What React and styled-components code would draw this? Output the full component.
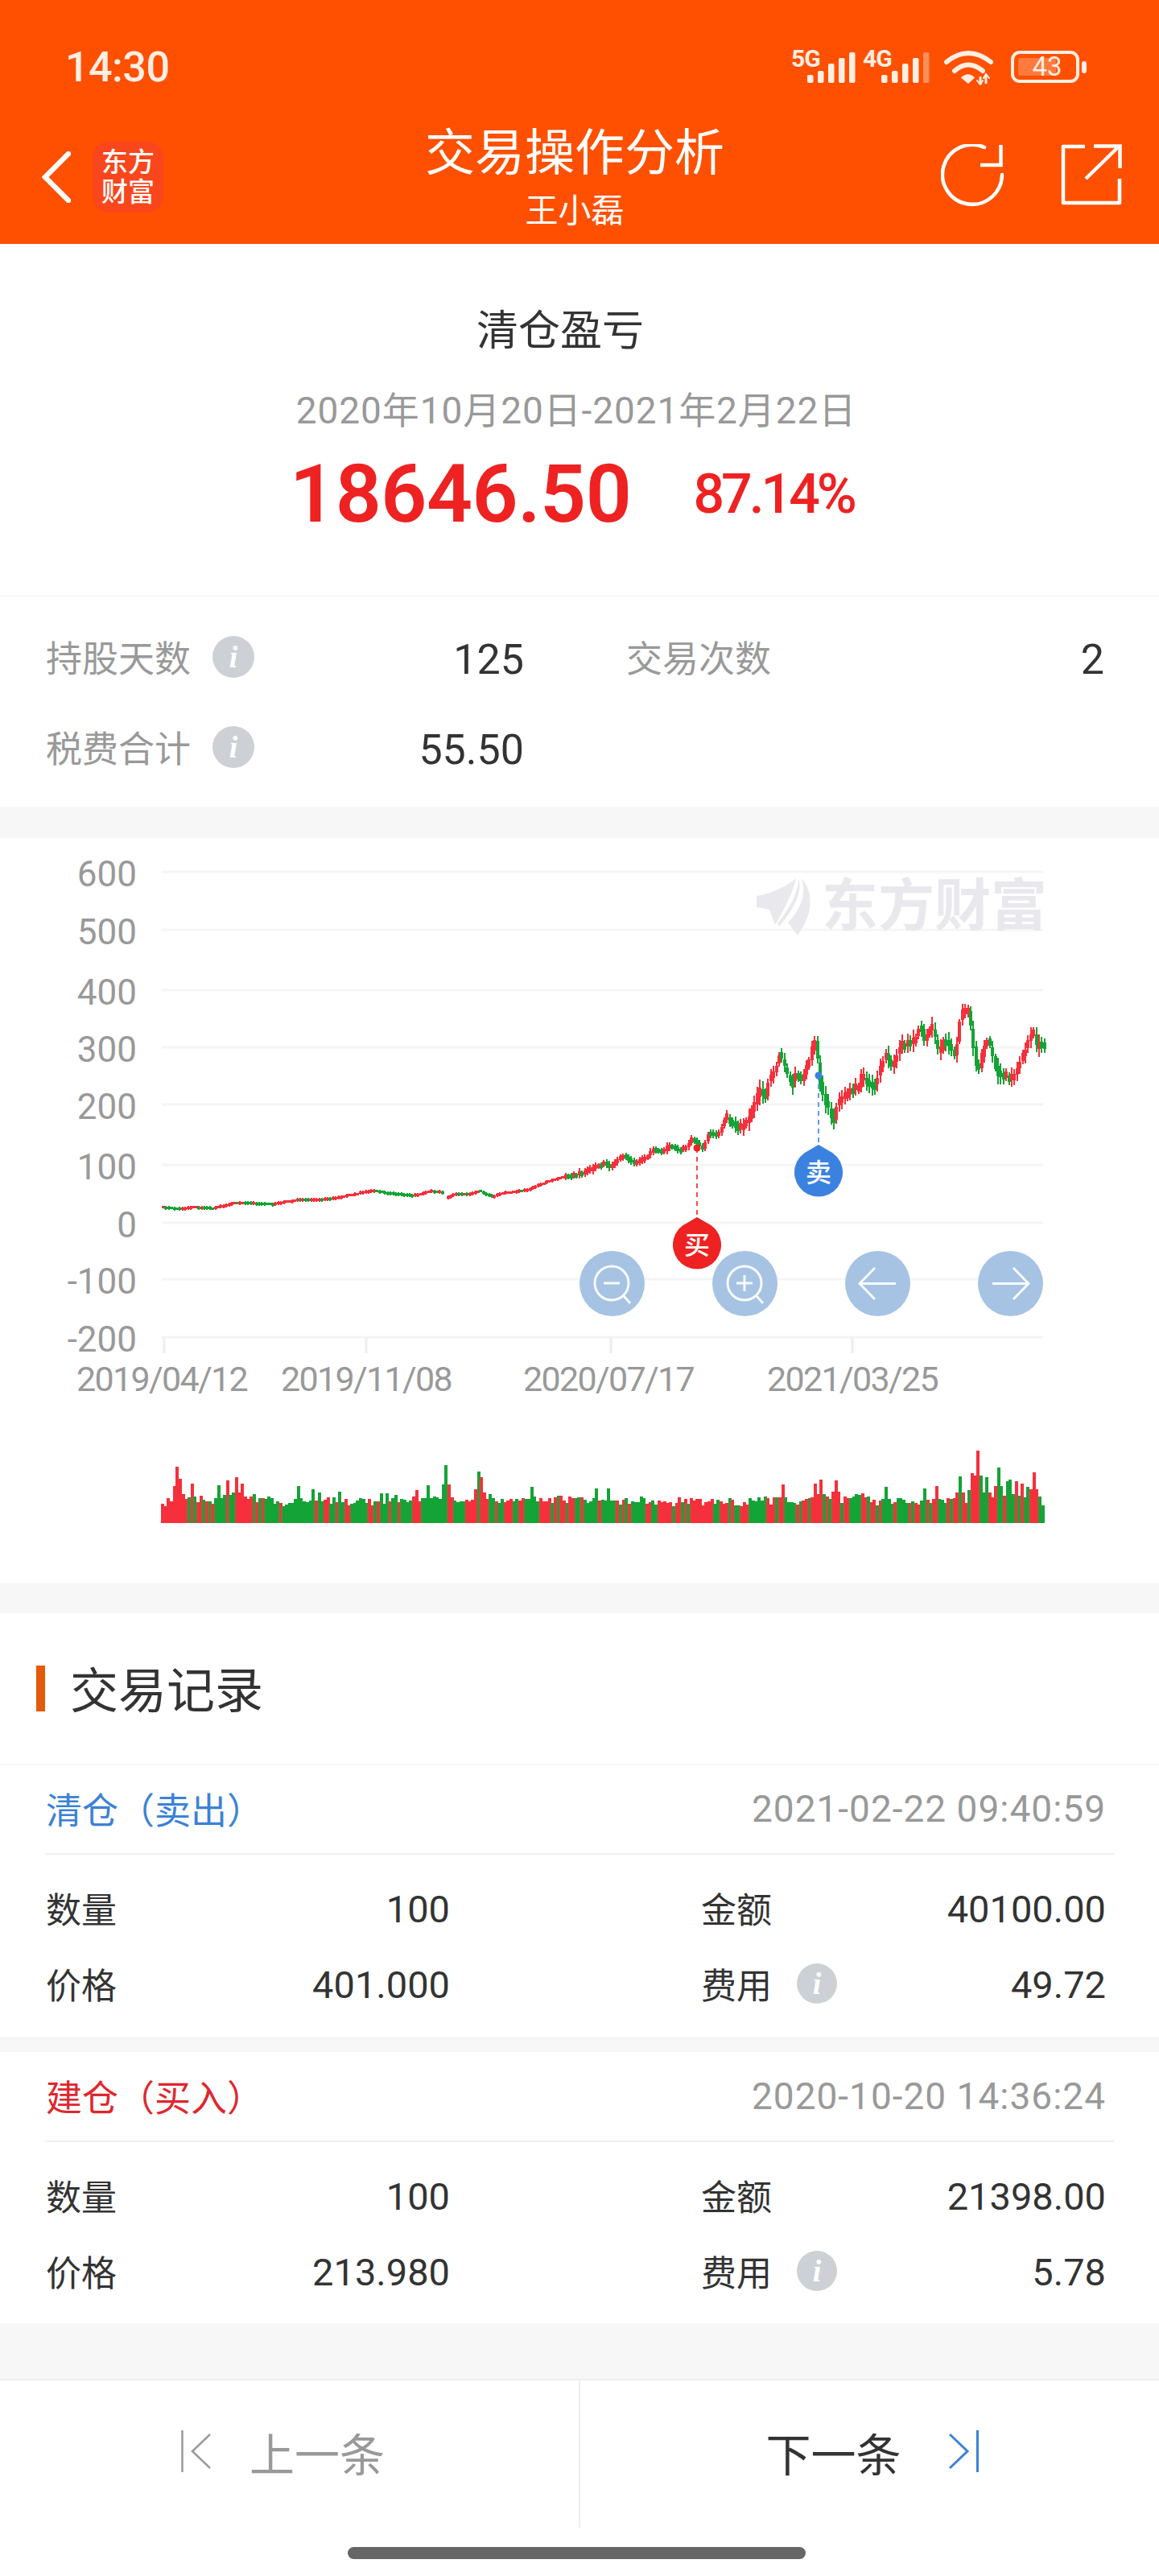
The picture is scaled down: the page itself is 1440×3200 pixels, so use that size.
import React from "react";
import styled, { createGlobalStyle } from "styled-components";

const FONT = `Roboto, "Noto Sans CJK SC", sans-serif`;

const GlobalStyle = createGlobalStyle`
  html, body {
    margin: 0;
    padding: 0;
    background: #fff;
  }
  * {
    box-sizing: border-box;
  }
`;

const Page = styled.div`
  width: 1440px;
  height: 3200px;
  display: flex;
  flex-direction: column;
  overflow: hidden;
  background: #f7f7f7;
  font-family: ${FONT};
  color: #333;
`;

const Header = styled.header`
  height: 303px;
  background: #fe5000;
  color: #fff;
`;

const StatusBar = styled.div`
  height: 168px;
  padding: 60px 99px 0 81px;
  display: flex;
  justify-content: space-between;
  align-items: flex-start;
  color: #ffeee2;
`;

const Clock = styled.div`
  font-size: 52px;
  line-height: 48px;
  font-weight: 500;
  letter-spacing: -0.5px;
`;

const StatusIcons = styled.div`
  display: flex;
  align-items: flex-start;
`;

const Net = styled.div`
  position: relative;
  width: ${(props) => props.$width}px;
  height: 40px;
  margin: 4px 0 0 ${(props) => props.$gap || 0}px;
`;

const NetLabel = styled.span`
  position: absolute;
  left: 0;
  top: -7px;
  font-size: 30px;
  line-height: 32px;
  font-weight: 700;
  letter-spacing: -1px;
`;

const NetBars = styled.svg`
  position: absolute;
  right: 0;
  top: 0;
`;

const Wifi = styled.svg`
  margin: 2px 0 0 18px;
`;

const Battery = styled.div`
  position: relative;
  width: 85px;
  height: 40px;
  margin: 3px 0 0 21px;
  border: 4px solid #ffeee2;
  border-radius: 11px;
  font-size: 33px;
  line-height: 32px;
  text-align: center;
  padding-left: 5px;
  font-weight: 400;

  &::before {
    content: "";
    position: absolute;
    left: 5px;
    top: 5px;
    bottom: 5px;
    width: 47px;
    border-radius: 3px;
    background: #ff7a3c;
  }

  &::after {
    content: "";
    position: absolute;
    right: -13px;
    top: 9px;
    width: 6px;
    height: 15px;
    border-radius: 3px;
    background: #ffeee2;
  }
`;

const BatteryText = styled.span`
  position: relative;
`;

const NavBar = styled.div`
  height: 135px;
  padding: 0 46px 0 34px;
  display: grid;
  grid-template-columns: 1fr auto 1fr;
  align-items: start;
`;

const NavLeft = styled.div`
  display: flex;
  align-items: center;
  gap: 27px;
  padding: 8px 0 0 18px;
`;

const LogoBadge = styled.div`
  width: 88px;
  height: 88px;
  border-radius: 20px;
  background: #f9461c;
  display: grid;
  grid-template-columns: 33px 33px;
  justify-content: center;
  align-content: center;
  font-size: 33px;
  line-height: 37px;
  text-align: center;
  font-weight: 500;
`;

const NavTitle = styled.div`
  display: flex;
  flex-direction: column;
  align-items: center;
`;

const TitleMain = styled.div`
  font-size: 62px;
  line-height: 70px;
  margin-top: -12px;
`;

const TitleSub = styled.div`
  font-size: 41px;
  line-height: 48px;
  margin-top: 12px;
`;

const NavRight = styled.div`
  display: flex;
  justify-content: flex-end;
  gap: 71px;
  padding-top: 11px;
`;

const Summary = styled.section`
  height: 439px;
  padding-top: 73px;
  background: #fff;
  border-bottom: 1px solid #eee;
  display: flex;
  flex-direction: column;
  align-items: center;
`;

const SummaryTitle = styled.div`
  font-size: 52px;
  line-height: 72px;
  margin-right: 48px;
`;

const SummaryDate = styled.div`
  margin-top: 32px;
  margin-right: 8px;
  font-size: 46px;
  line-height: 60px;
  color: #999;
  letter-spacing: 0.9px;
`;

const AmountRow = styled.div`
  margin-top: 18px;
  display: flex;
  align-items: center;
  gap: 77px;
  padding-right: 19px;
  color: #ee2222;
`;

const Amount = styled.div`
  font-size: 100px;
  line-height: 112px;
  font-weight: 600;
  letter-spacing: -0.5px;
`;

const Percent = styled.div`
  font-size: 68px;
  line-height: 80px;
  font-weight: 500;
  letter-spacing: -4px;
`;

const Stats = styled.section`
  height: 262px;
  padding: 19px 67px 0 57px;
  background: #fff;
  display: grid;
  grid-template-columns: 594px 594px;
  grid-auto-rows: 112px;
  column-gap: 127px;
`;

const StatItem = styled.div`
  display: flex;
  align-items: center;
`;

const StatLabel = styled.span`
  font-size: 45px;
  color: #999;
`;

const InfoDot = styled.span`
  width: ${(props) => props.$size}px;
  height: ${(props) => props.$size}px;
  margin-left: ${(props) => props.$gap}px;
  border-radius: 50%;
  background: #cdd1d6;
  color: #fff;
  font-family: "Liberation Serif", serif;
  font-style: italic;
  font-weight: 700;
  font-size: 38px;
  display: flex;
  align-items: center;
  justify-content: center;
`;

const Value = styled.span`
  margin-left: auto;
  margin-top: ${(props) => props.$drop || 4}px;
  font-size: ${(props) => props.$size || 47}px;
  color: #333;
`;

const ChartSection = styled.section`
  position: relative;
  height: 926px;
  margin-top: 39px;
  background: #fff;
`;

const ChartSvg = styled.svg`
  display: block;
`;

const AxisText = styled.text`
  font-family: ${FONT};
  font-size: ${(props) => props.$size}px;
  fill: #999;
  letter-spacing: ${(props) => props.$spacing || 0}px;
`;

const Watermark = styled.text`
  font-family: "Noto Sans CJK SC", sans-serif;
  font-size: 70px;
  font-weight: 700;
  fill: #e9e9ed;
`;

const MarkText = styled.text`
  font-family: "Noto Sans CJK SC", sans-serif;
  font-size: 32px;
  font-weight: 500;
  fill: #fff;
`;

const ChartButtons = styled.div`
  position: absolute;
  right: 144px;
  top: 513px;
  display: flex;
  gap: 84px;
`;

const ChartButton = styled.div`
  width: 81px;
  height: 81px;
  border-radius: 50%;
  background: #a6c3e4;
`;

const Records = styled.section`
  margin-top: 37px;
  background: #fff;
`;

const RecordsHead = styled.div`
  height: 188px;
  padding-left: 45px;
  border-bottom: 1px solid #eee;
  display: flex;
  align-items: center;
  gap: 31px;
`;

const HeadMark = styled.span`
  width: 11px;
  height: 57px;
  background: #e35a0b;
`;

const HeadTitle = styled.h2`
  margin: 0 0 4px;
  font-size: 60px;
  font-weight: 400;
`;

const Card = styled.article`
  height: 338px;
  margin-top: ${(props) => (props.$first ? 0 : 19)}px;
  background: #fff;
`;

const CardHead = styled.div`
  height: 112px;
  margin: 0 56px;
  padding: 0 10px 0 1px;
  border-bottom: 2px solid #f0f0f0;
  display: flex;
  justify-content: space-between;
  align-items: center;
`;

const CardType = styled.span`
  font-size: 45px;
  color: ${(props) => props.$color};
`;

const CardTime = styled.span`
  font-size: 46px;
  letter-spacing: 1px;
  color: #999;
`;

const CardBody = styled.div`
  padding: 19px 66px 0 57px;
  display: grid;
  grid-template-columns: 502px 503px;
  grid-auto-rows: 94px;
  column-gap: 312px;
`;

const CardCell = styled.div`
  display: flex;
  align-items: center;
  font-size: 44px;
`;

const Footer = styled.footer`
  margin-top: 69px;
  height: 246px;
  background: #fff;
  border-top: 2px solid #eee;
`;

const FooterButtons = styled.div`
  height: 183px;
  display: flex;
`;

const FooterButton = styled.div`
  flex: 0 0 ${(props) => props.$width}px;
  display: flex;
  align-items: center;
  justify-content: center;
  gap: ${(props) => props.$gap}px;
  padding: ${(props) => props.$pad};
  font-size: 56px;
  color: ${(props) => props.$color};
  border-right: ${(props) => (props.$divider ? "2px solid #eee" : "none")};
`;

const HomeBar = styled.div`
  width: 569px;
  height: 15px;
  margin: 24px 0 0 432px;
  border-radius: 8px;
  background: #666;
`;

const RED = "#f5303c";
const GREEN = "#14a336";

const gridYs = [1084, 1156, 1231, 1302, 1373, 1448, 1520, 1590, 1662];
const gridLabels = ["600", "500", "400", "300", "200", "100", "0", "-100", "-200"];
const dateLabels = [
  ["2019/04/12", 201, 204],
  ["2019/11/08", 455, 455],
  ["2020/07/17", 756, 759],
  ["2021/03/25", 1059, 1059],
];

const pricePath = [
  [201, 1501], [225, 1503], [239, 1501], [266, 1502], [294, 1495], [340, 1497], [372, 1491],
  [390, 1492], [418, 1489.5], [448, 1483], [466, 1480], [487, 1484], [514, 1486], [535, 1481],
  [551, 1482], [554, 1489.5], [565, 1485], [588, 1484], [595, 1480], [613, 1488], [620, 1484],
  [657, 1479], [675, 1471], [700, 1463], [720, 1460], [752, 1446], [759, 1450], [775, 1436.5],
  [789, 1446], [803, 1440], [812, 1428], [826, 1432], [832, 1422], [844, 1430.6], [855, 1426],
  [860, 1414.6], [874, 1428], [881, 1409.5], [894, 1410], [903, 1387], [920, 1403], [931, 1393.5],
  [945, 1356], [954, 1364], [956, 1341], [963, 1332.5], [970, 1309], [984, 1351.5], [991, 1330],
  [995.5, 1347], [1007, 1318], [1014, 1292.5], [1018.5, 1335], [1023, 1358], [1025, 1364],
  [1037, 1393.5], [1041, 1372.5], [1062, 1351.5], [1067, 1356], [1071, 1339], [1087, 1351.5],
  [1101, 1309], [1110, 1326], [1119, 1301], [1138, 1292.5], [1145, 1271.5], [1149, 1295],
  [1158, 1273.6], [1168, 1311.5], [1174.5, 1292.5], [1188, 1313.6], [1195, 1259], [1204, 1257],
  [1216, 1335], [1227, 1288], [1241, 1335], [1259.5, 1341], [1273, 1309], [1285, 1278],
  [1287, 1305], [1294, 1292.5], [1297, 1303],
];

const volumePeaks = [
  [221, 70], [225, 55], [238, 49], [270, 47], [283, 53], [292, 57], [302, 49], [324, 31], [370, 46],
  [389, 42], [397, 38], [422, 39], [473, 37], [482, 37], [518, 41], [532, 47], [554, 72], [594, 64],
  [598, 57], [661, 45], [742, 43], [755, 43], [972, 48], [1012, 49], [1021, 54], [1037, 59], [1040, 53],
  [1102, 45], [1147, 43], [1165, 46], [1191, 58], [1207, 62], [1214, 71], [1216, 90], [1227, 57],
  [1241, 69], [1250, 52], [1256, 54], [1261, 52], [1269, 49], [1278, 45], [1285, 63], [1292, 33], [1296, 22],
];

function mulberry(seed) {
  let a = seed;
  return () => {
    a = (a + 0x6d2b79f5) | 0;
    let t = Math.imul(a ^ (a >>> 15), 1 | a);
    t = (t + Math.imul(t ^ (t >>> 7), 61 | t)) ^ t;
    return ((t ^ (t >>> 14)) >>> 0) / 4294967296;
  };
}

function priceAt(x) {
  for (let i = 0; i < pricePath.length - 1; i++) {
    const [x0, y0] = pricePath[i];
    const [x1, y1] = pricePath[i + 1];
    if (x >= x0 && x <= x1) return y0 + ((y1 - y0) * (x - x0)) / (x1 - x0);
  }
  return pricePath[pricePath.length - 1][1];
}

function buildCandles() {
  const rnd = mulberry(7);
  const list = [];
  const step = 3.4;
  for (let x = 201; x < 1297; x += step) {
    if (x > 550 && x < 553.5) continue;
    const amp = x < 700 ? 0.5 : x < 900 ? 2 : 5;
    const minBody = x < 700 ? 2.5 : x < 900 ? 5 : 8;
    const open = priceAt(x);
    const close = priceAt(x + step) + (rnd() - 0.5) * amp * 2;
    const up = close < open;
    const h = Math.round(Math.max(Math.abs(close - open), minBody));
    const top = Math.round((open + close) / 2 - h / 2);
    const wick = Math.round(amp * (0.5 + rnd() * 1.5));
    list.push({ x: Math.round(x), top, h, wick, color: up ? RED : GREEN });
  }
  return list;
}

function buildVolumes() {
  const rnd = mulberry(23);
  const list = [];
  const step = 3.67;
  let color = RED;
  let base = 24;
  for (let x = 200; x < 1296; x += step) {
    if (rnd() > 0.55) color = color === RED ? GREEN : RED;
    base = base * 0.6 + (20 + rnd() * 16) * 0.4;
    let h = base + (rnd() - 0.5) * 8;
    for (const [px, ph] of volumePeaks) {
      const d = Math.abs(px - x - step / 2);
      if (d < step / 2) h = ph;
      else if (d < step * 1.5) h = Math.max(h, ph * 0.66);
    }
    list.push({ x: Math.round(x), h: Math.round(h), color });
  }
  return list;
}

const candles = buildCandles();
const volumes = buildVolumes();

function Signal({ label, width, gap, weak }) {
  const bars = [10, 15, 24, 31, 38];
  return (
    <Net $width={width} $gap={gap}>
      <NetLabel>{label}</NetLabel>
      <NetBars width="60" height="40" viewBox="0 0 60 40">
        {bars.map((h, i) => (
          <rect
            key={i}
            x={i * 13}
            y={39 - h}
            width="7.5"
            height={h}
            rx="2"
            fill="#ffeee2"
            opacity={weak && i === 4 ? 0.4 : 1}
          />
        ))}
      </NetBars>
    </Net>
  );
}

function WifiIcon() {
  return (
    <Wifi width="62" height="44" viewBox="0 0 62 44" fill="none" stroke="#ffeee2" strokeWidth="6" strokeLinecap="round">
      <path d="M3 15 Q30 -7 58 15" />
      <path d="M13 26 Q30 11 48 26" />
      <path d="M22 34.5 L30 41 L37 34.5 Q30 27.5 22 34.5Z" fill="#ffeee2" strokeWidth="1.5" />
      <path d="M45 33v10M52 31v11" strokeWidth="3" strokeLinecap="butt" />
      <path d="M41 38l4 5 3-5M49 35l3-5 4 5" strokeWidth="2" />
    </Wifi>
  );
}

function ChevronLeft() {
  return (
    <svg width="36" height="64" viewBox="0 0 36 64" fill="none" stroke="#fff" strokeWidth="6.5" strokeLinecap="round">
      <path d="M33 3 L4 32 L33 61" />
    </svg>
  );
}

function RefreshIcon() {
  return (
    <svg width="78" height="78" viewBox="0 0 78 78" fill="none" stroke="#fff" strokeWidth="4.5">
      <path d="M76 38 A37 37 0 1 1 54 4" strokeLinecap="round" />
      <path d="M74.5 1 V26 H49" />
    </svg>
  );
}

function ShareIcon() {
  return (
    <svg width="76" height="76" viewBox="0 0 76 76" fill="none" stroke="#fff" strokeWidth="4.5">
      <path d="M30 3 H3 V73 H73 V43" strokeLinejoin="round" />
      <path d="M31 43 L72 3" />
      <path d="M41 2.5 H73.5 V30" />
    </svg>
  );
}

function ZoomIcon({ plus }) {
  return (
    <svg width="81" height="81" viewBox="0 0 81 81" fill="none" stroke="#fff" strokeWidth="3" opacity="0.92">
      <circle cx="40" cy="40" r="21" />
      <path d="M55 56 L63 65" />
      <path d="M30 40 H50" />
      {plus && <path d="M40 30 V50" />}
    </svg>
  );
}

function ArrowIcon({ right }) {
  return (
    <svg width="81" height="81" viewBox="0 0 81 81" fill="none" stroke="#fff" strokeWidth="3" opacity="0.92">
      {right ? <path d="M18 40.5 H63 M44 21 L63 40.5 L44 60" /> : <path d="M63 40.5 H18 M37 21 L18 40.5 L37 60" />}
    </svg>
  );
}

function Marker({ cx, dotY, lineEnd, cy, color, label }) {
  return (
    <g>
      <circle cx={cx} cy={dotY} r="4.5" fill={color} />
      <path d={`M${cx} ${dotY} V${lineEnd}`} stroke={color} strokeWidth="1.6" strokeDasharray="6 5" />
      <path
        d={`M${cx} ${cy - 34} L${cx + 12} ${cy - 27} A30 30 0 1 1 ${cx - 12} ${cy - 27} Z`}
        fill={color}
      />
      <MarkText x={cx} y={cy + 12} textAnchor="middle">
        {label}
      </MarkText>
    </g>
  );
}

function PriceChart() {
  return (
    <ChartSvg width="1440" height="926" viewBox="0 1042 1440 926">
      {gridYs.map((y, i) => (
        <g key={y}>
          <line x1="201" x2="1296" y1={y} y2={y} stroke="#f5f5f5" strokeWidth="3" />
          <AxisText x="170" y={y + 18} textAnchor="end" $size={44}>
            {gridLabels[i]}
          </AxisText>
        </g>
      ))}
      {dateLabels.map(([text, lx, tx]) => (
        <g key={text}>
          <line x1={tx} x2={tx} y1="1662" y2="1682" stroke="#eee" strokeWidth="3" />
          <AxisText x={lx} y="1729" textAnchor="middle" $size={43} $spacing={-1.7}>
            {text}
          </AxisText>
        </g>
      ))}
      <g fill="#e9e9ed">
        <path d="M940 1114 C955 1112 975 1104 989 1092 C985 1110 975 1130 963 1150 L956 1131 L940 1128 Z" />
        <path d="M992 1092 C997 1106 990 1126 968 1152 L966 1148 C982 1128 992 1110 992 1092 Z" />
        <path d="M996 1092 C1012 1112 1010 1136 991 1163 L979 1147 C996 1130 1002 1110 996 1092 Z" />
      </g>
      <Watermark x="1021" y="1151">东方财富</Watermark>
      {candles.map((c, i) => (
        <g key={i} fill={c.color}>
          <rect x={c.x + 1} y={c.top - c.wick} width="2" height={c.h + c.wick * 2} />
          <rect x={c.x} y={c.top} width="4" height={c.h} />
        </g>
      ))}
      <Marker cx={866} dotY={1427} lineEnd={1511} cy={1547} color="#ee2222" label="买" />
      <Marker cx={1017} dotY={1337} lineEnd={1421} cy={1457} color="#3b82e0" label="卖" />
      {volumes.map((v, i) => (
        <rect key={i} x={v.x} y={1893 - v.h} width="4" height={v.h} fill={v.color} />
      ))}
      {volumes.map((v, i) => {
        const next = volumes[i + 1];
        if (!next || next.color === v.color) return null;
        const h = Math.min(v.h, next.h);
        return <rect key={i} x={next.x - 1} y={1893 - h} width="2" height={h} fill="#8b6b3c" />;
      })}
    </ChartSvg>
  );
}

function TradeCard({ first, type, color, time, qty, amount, price, fee }) {
  return (
    <Card $first={first}>
      <CardHead>
        <CardType $color={color}>{type}</CardType>
        <CardTime>{time}</CardTime>
      </CardHead>
      <CardBody>
        <CardCell>
          数量<Value>{qty}</Value>
        </CardCell>
        <CardCell>
          金额<Value>{amount}</Value>
        </CardCell>
        <CardCell>
          价格<Value>{price}</Value>
        </CardCell>
        <CardCell>
          费用
          <InfoDot $size={50} $gap={31}>i</InfoDot>
          <Value>{fee}</Value>
        </CardCell>
      </CardBody>
    </Card>
  );
}

function App() {
  return (
    <>
      <GlobalStyle />
      <Page>
        <Header>
          <StatusBar>
            <Clock>14:30</Clock>
            <StatusIcons>
              <Signal label="5G" width={80} />
              <Signal label="4G" width={83} gap={9} weak />
              <WifiIcon />
              <Battery>
                <BatteryText>43</BatteryText>
              </Battery>
            </StatusIcons>
          </StatusBar>
          <NavBar>
            <NavLeft>
              <ChevronLeft />
              <LogoBadge>
                <span>东</span>
                <span>方</span>
                <span>财</span>
                <span>富</span>
              </LogoBadge>
            </NavLeft>
            <NavTitle>
              <TitleMain>交易操作分析</TitleMain>
              <TitleSub>王小磊</TitleSub>
            </NavTitle>
            <NavRight>
              <RefreshIcon />
              <ShareIcon />
            </NavRight>
          </NavBar>
        </Header>

        <Summary>
          <SummaryTitle>清仓盈亏</SummaryTitle>
          <SummaryDate>2020年10月20日-2021年2月22日</SummaryDate>
          <AmountRow>
            <Amount>18646.50</Amount>
            <Percent>87.14%</Percent>
          </AmountRow>
        </Summary>

        <Stats>
          <StatItem>
            <StatLabel>持股天数</StatLabel>
            <InfoDot $size={52} $gap={27}>i</InfoDot>
            <Value $size={52} $drop={8}>125</Value>
          </StatItem>
          <StatItem>
            <StatLabel>交易次数</StatLabel>
            <Value $size={52} $drop={8}>2</Value>
          </StatItem>
          <StatItem>
            <StatLabel>税费合计</StatLabel>
            <InfoDot $size={52} $gap={27}>i</InfoDot>
            <Value $size={52} $drop={8}>55.50</Value>
          </StatItem>
        </Stats>

        <ChartSection>
          <PriceChart />
          <ChartButtons>
            <ChartButton><ZoomIcon /></ChartButton>
            <ChartButton><ZoomIcon plus /></ChartButton>
            <ChartButton><ArrowIcon /></ChartButton>
            <ChartButton><ArrowIcon right /></ChartButton>
          </ChartButtons>
        </ChartSection>

        <Records>
          <RecordsHead>
            <HeadMark />
            <HeadTitle>交易记录</HeadTitle>
          </RecordsHead>
          <TradeCard
            first
            type="清仓（卖出）"
            color="#3b82d6"
            time="2021-02-22 09:40:59"
            qty="100"
            amount="40100.00"
            price="401.000"
            fee="49.72"
          />
        </Records>
        <TradeCard
          type="建仓（买入）"
          color="#e0262e"
          time="2020-10-20 14:36:24"
          qty="100"
          amount="21398.00"
          price="213.980"
          fee="5.78"
        />

        <Footer>
          <FooterButtons>
            <FooterButton $width={721} $divider $gap={48} $pad="0 16px 6px 0" $color="#999">
              <svg width="37" height="52" viewBox="0 0 37 52" fill="none" stroke="#999" strokeWidth="2.5">
                <path d="M1.5 0 V52" />
                <path d="M36 5 L14 26 L36 47" />
              </svg>
              上一条
            </FooterButton>
            <FooterButton $width={719} $gap={59} $pad="0 0 6px 6px" $color="#333">
              下一条
              <svg width="37" height="52" viewBox="0 0 37 52" fill="none" stroke="#3b82d6" strokeWidth="3">
                <path d="M35.5 0 V52" />
                <path d="M1 5 L23 26 L1 47" />
              </svg>
            </FooterButton>
          </FooterButtons>
          <HomeBar />
        </Footer>
      </Page>
    </>
  );
}

export default App;
